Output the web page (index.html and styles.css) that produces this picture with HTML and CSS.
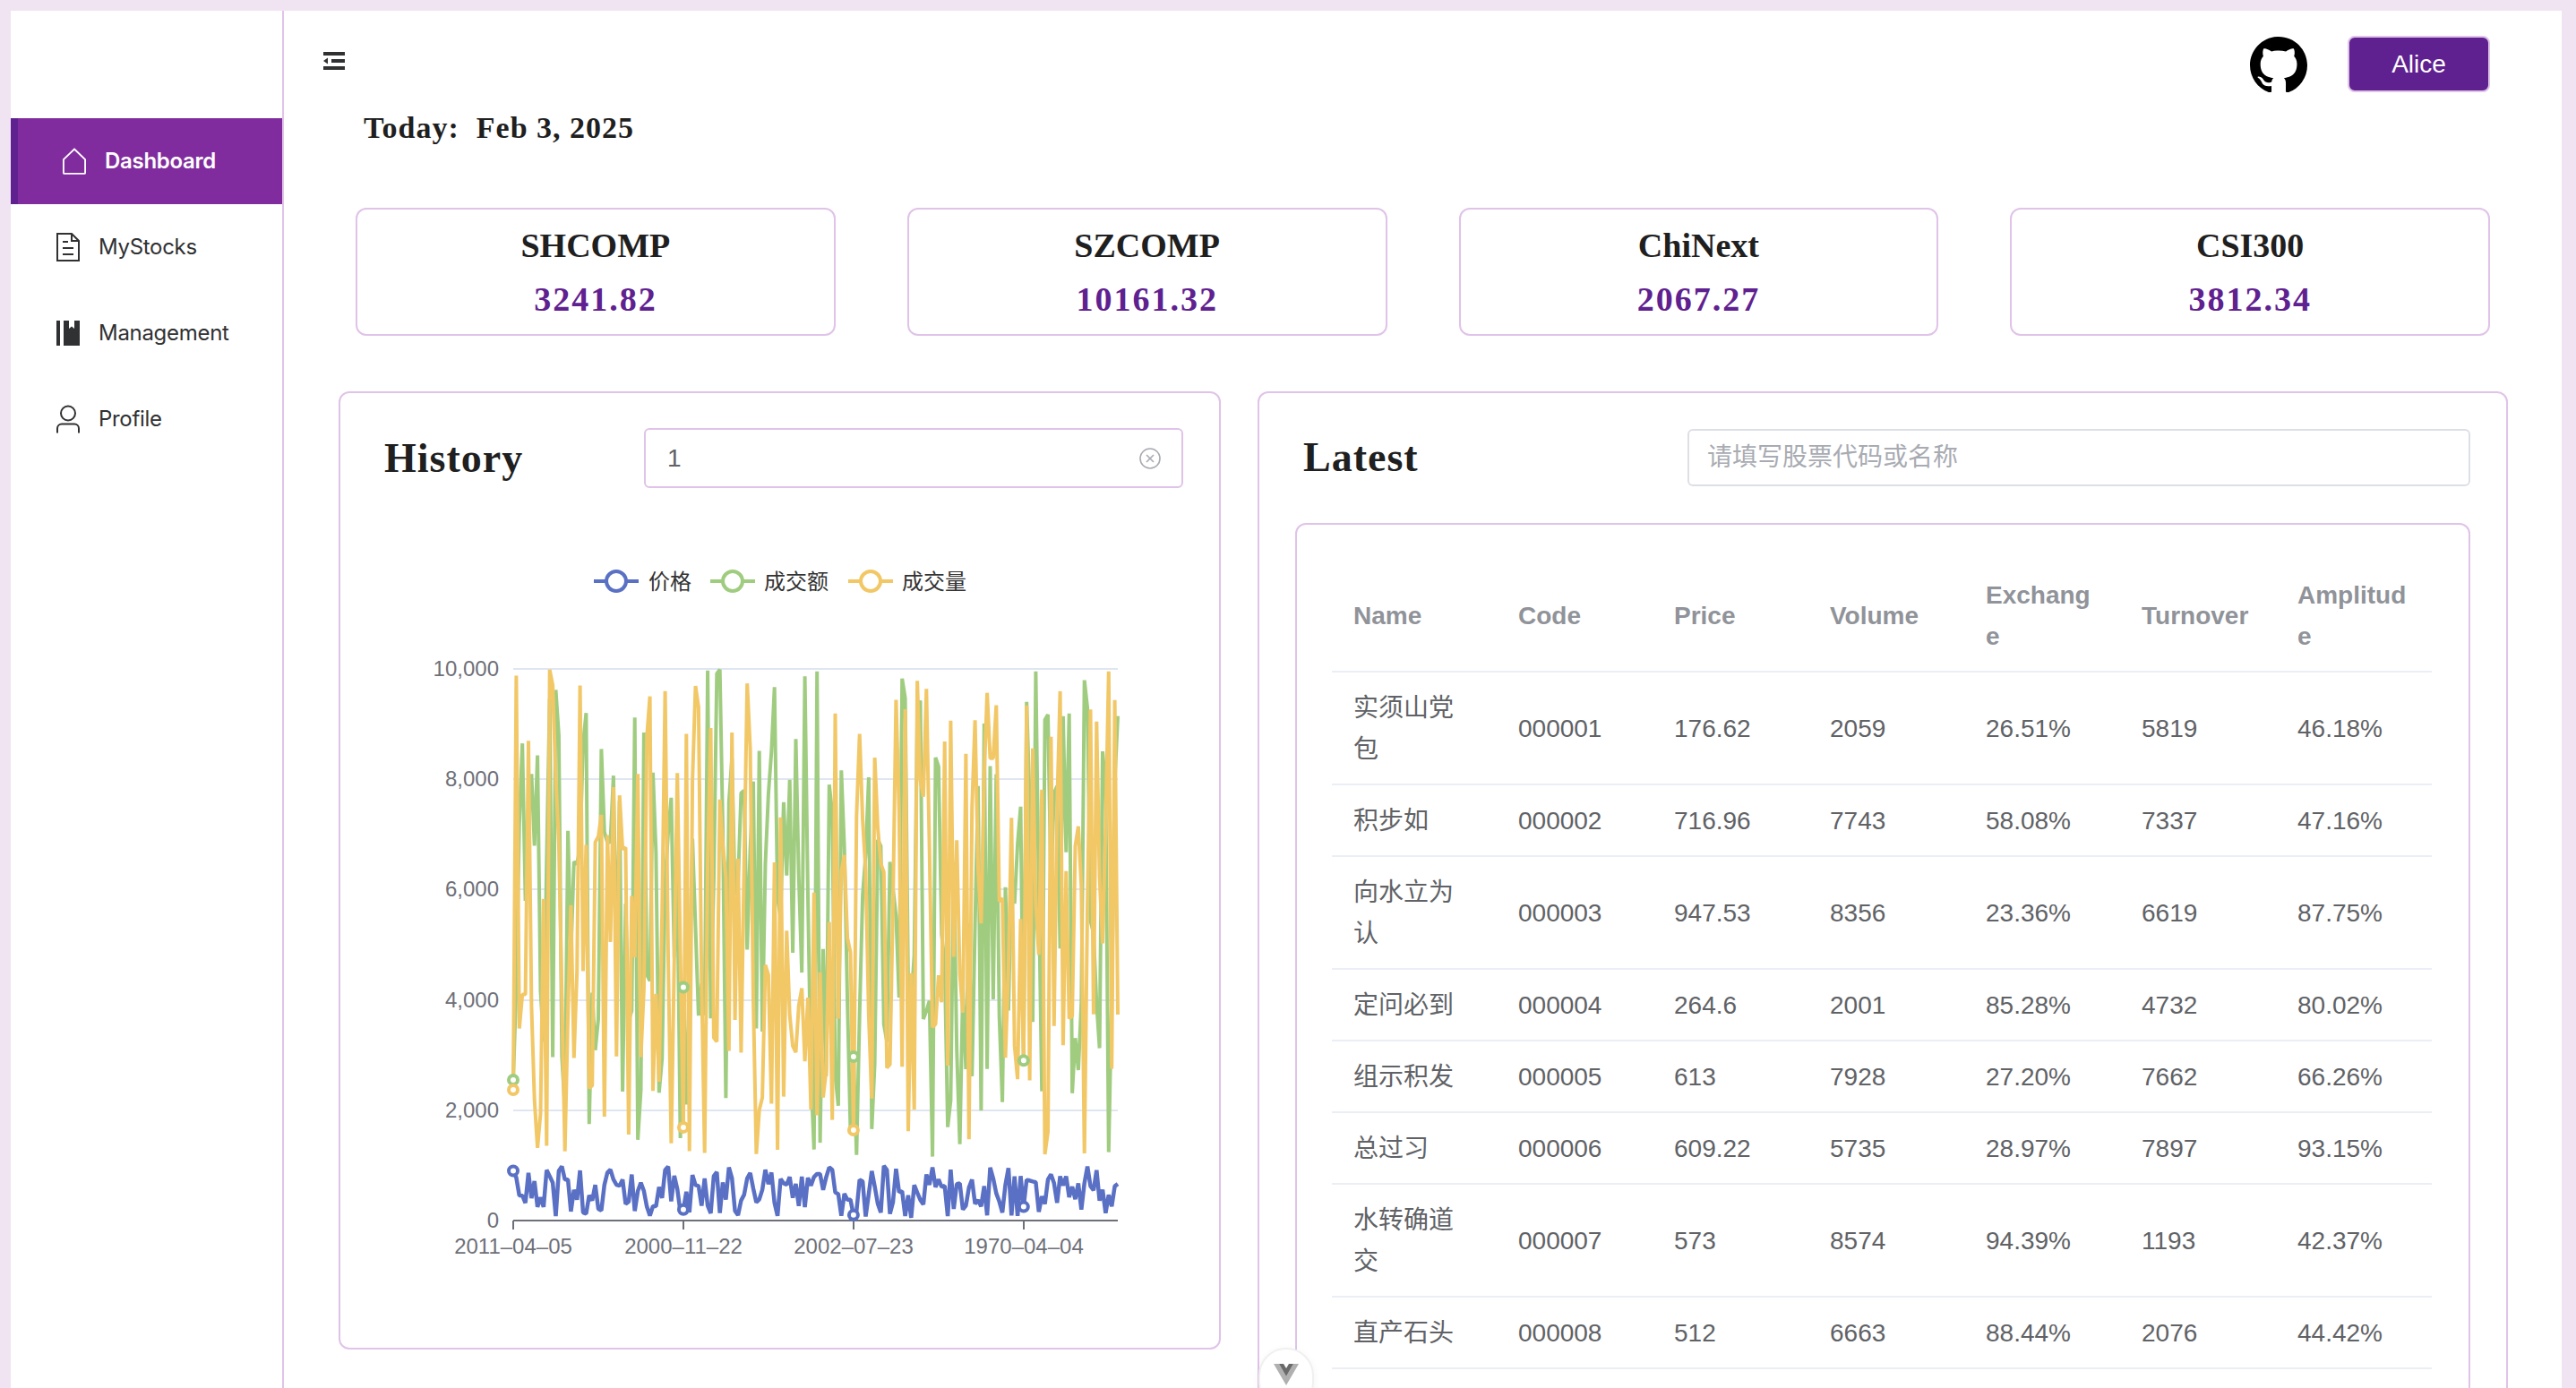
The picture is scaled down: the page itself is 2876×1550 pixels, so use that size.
FILE: index.html
```html
<!DOCTYPE html>
<html lang="en">
<head>
  <meta charset="UTF-8">
  <title>Dashboard</title>
  <link rel="stylesheet" href="styles.css">
</head>
<body>
<div class="layout">
  <aside class="sidebar">
    <a class="nav-item active">
      <svg class="nav-icon" viewBox="0 0 28 32" fill="none" stroke="currentColor" stroke-width="2"><path d="M14 1.5 L27 14 V30 a1 1 0 0 1 -1 1 H2 a1 1 0 0 1 -1 -1 V14 Z"/></svg>
      <span>Dashboard</span>
    </a>
    <a class="nav-item">
      <svg class="nav-icon" viewBox="0 0 26 32" fill="none" stroke="currentColor" stroke-width="2"><path d="M1 1 H17 L25 9 V31 H1 Z"/><path d="M17 1 V9 H25"/><path d="M7 10 H13 M7 17 H19 M7 24 H19"/></svg>
      <span>MyStocks</span>
    </a>
    <a class="nav-item">
      <svg class="nav-icon" viewBox="0 0 26 28" fill="currentColor"><path d="M0 0 H4 V28 H0 Z"/><path d="M8 0 H14 V9 L17 6.5 L20 9 V0 H26 V28 H8 Z"/></svg>
      <span>Management</span>
    </a>
    <a class="nav-item">
      <svg class="nav-icon" viewBox="0 0 26 31" fill="none" stroke="currentColor" stroke-width="2"><circle cx="13" cy="9" r="8"/><path d="M1 31 V26 a5 5 0 0 1 5 -5 H20 a5 5 0 0 1 5 5 V31"/></svg>
      <span>Profile</span>
    </a>
  </aside>

  <main class="main">
    <div class="topbar">
      <svg class="fold-icon" viewBox="0 0 24 20" fill="currentColor"><path d="M0 0 H24 V4 H0 Z M9 8 H24 V12 H9 Z M0 16 H24 V20 H0 Z M0 10 L5 6.5 V13.5 Z"/></svg>
      <div class="topbar-right">
        <svg class="github-icon" viewBox="0 0 16 15.5"><path d="M8 0C3.58 0 0 3.58 0 8c0 3.54 2.29 6.53 5.47 7.59.4.07.55-.17.55-.38 0-.19-.01-.82-.01-1.49-2.01.37-2.53-.49-2.69-.94-.09-.23-.48-.94-.82-1.13-.28-.15-.68-.52-.01-.53.63-.01 1.08.58 1.23.82.72 1.21 1.87.87 2.33.66.07-.52.28-.87.51-1.07-1.78-.2-3.64-.89-3.64-3.95 0-.87.31-1.59.82-2.15-.08-.2-.36-1.02.08-2.12 0 0 .67-.21 2.2.82.64-.18 1.32-.27 2-.27.68 0 1.36.09 2 .27 1.53-1.04 2.2-.82 2.2-.82.44 1.1.16 1.92.08 2.12.51.56.82 1.27.82 2.15 0 3.07-1.87 3.75-3.65 3.95.29.25.54.73.54 1.48 0 1.07-.01 1.93-.01 2.2 0 .21.15.46.55.38A8.013 8.013 0 0016 8c0-4.42-3.58-8-8-8z"/></svg>
        <button class="user-btn">Alice</button>
      </div>
    </div>

    <div class="today">Today:&nbsp; Feb 3, 2025</div>

    <div class="index-row">
      <div class="index-card"><div class="index-name">SHCOMP</div><div class="index-value">3241.82</div></div>
      <div class="index-card"><div class="index-name">SZCOMP</div><div class="index-value">10161.32</div></div>
      <div class="index-card"><div class="index-name">ChiNext</div><div class="index-value">2067.27</div></div>
      <div class="index-card"><div class="index-name">CSI300</div><div class="index-value">3812.34</div></div>
    </div>

    <div class="panels">
      <section class="panel history">
        <div class="panel-head">
          <h2 class="panel-title">History</h2>
          <div class="search history-search">
            <span class="search-value">1</span>
            <svg class="clear-icon" viewBox="0 0 24 24" fill="none" stroke="currentColor" stroke-width="1.6"><circle cx="12" cy="12" r="11"/><path d="M8 8 L16 16 M16 8 L8 16"/></svg>
          </div>
        </div>
        <svg class="chart" id="chart" viewBox="380 600 981 860">
          <g class="legend">
            <path class="blue-line" d="M663 649 H713"/><circle class="blue-mark" cx="688" cy="649" r="11"/>
            <text x="724" y="658">价格</text>
            <path class="green-line" d="M793 649 H843"/><circle class="green-mark" cx="818" cy="649" r="11"/>
            <text x="853" y="658">成交额</text>
            <path class="yellow-line" d="M947 649 H997"/><circle class="yellow-mark" cx="972" cy="649" r="11"/>
            <text x="1007" y="658">成交量</text>
          </g>
          <g class="grid">
            <path d="M573 747 H1248 M573 870 H1248 M573 993 H1248 M573 1117 H1248 M573 1240 H1248"/>
          </g>
          <g class="y-labels">
            <text x="557" y="755">10,000</text>
            <text x="557" y="878">8,000</text>
            <text x="557" y="1001">6,000</text>
            <text x="557" y="1125">4,000</text>
            <text x="557" y="1248">2,000</text>
            <text x="557" y="1371">0</text>
          </g>
          <path class="axis" d="M573 1363 H1248 M573 1363 V1373 M763 1363 V1373 M953 1363 V1373 M1143 1363 V1373"/>
          <g class="x-labels">
            <text x="573" y="1400">2011–04–05</text>
            <text x="763" y="1400">2000–11–22</text>
            <text x="953" y="1400">2002–07–23</text>
            <text x="1143" y="1400">1970–04–04</text>
          </g>
          <polyline class="blue-line" id="line-price"/>
          <polyline class="green-line" id="line-amount"/>
          <polyline class="yellow-line" id="line-volume"/>
          <g id="marks"></g>
        </svg>
      </section>

      <section class="panel latest">
        <div class="panel-head">
          <h2 class="panel-title">Latest</h2>
          <input class="search latest-search" type="text" placeholder="请填写股票代码或名称">
        </div>
        <div class="table-card">
          <table class="stock-table">
            <thead>
              <tr><th>Name</th><th>Code</th><th>Price</th><th>Volume</th><th>Exchange</th><th>Turnover</th><th>Amplitude</th></tr>
            </thead>
            <tbody>
              <tr><td>实须山党包</td><td>000001</td><td>176.62</td><td>2059</td><td>26.51%</td><td>5819</td><td>46.18%</td></tr>
              <tr><td>积步如</td><td>000002</td><td>716.96</td><td>7743</td><td>58.08%</td><td>7337</td><td>47.16%</td></tr>
              <tr><td>向水立为认</td><td>000003</td><td>947.53</td><td>8356</td><td>23.36%</td><td>6619</td><td>87.75%</td></tr>
              <tr><td>定问必到</td><td>000004</td><td>264.6</td><td>2001</td><td>85.28%</td><td>4732</td><td>80.02%</td></tr>
              <tr><td>组示积发</td><td>000005</td><td>613</td><td>7928</td><td>27.20%</td><td>7662</td><td>66.26%</td></tr>
              <tr><td>总过习</td><td>000006</td><td>609.22</td><td>5735</td><td>28.97%</td><td>7897</td><td>93.15%</td></tr>
              <tr><td>水转确道交</td><td>000007</td><td>573</td><td>8574</td><td>94.39%</td><td>1193</td><td>42.37%</td></tr>
              <tr><td>直产石头</td><td>000008</td><td>512</td><td>6663</td><td>88.44%</td><td>2076</td><td>44.42%</td></tr>
            </tbody>
          </table>
        </div>
      </section>
    </div>
  </main>
</div>

<div class="devtools-btn">
  <svg viewBox="0 0 28 24"><path fill="#b0b0b0" d="M0 0 H6 L14 14 L22 0 H28 L14 24 Z"/><path fill="#6a6a6a" d="M6 0 H11 L14 5 L17 0 H22 L14 14 Z"/></svg>
</div>

<script src="app.js"></script>
</body>
</html>
```

FILE: styles.css
```css
* {
  box-sizing: border-box;
}
html, body {
  margin: 0;
  height: 100%;
  overflow: hidden;
}
body {
  font-family: "Liberation Sans", "Noto Sans CJK SC", sans-serif;
  color: #606266;
}
.layout {
  display: flex;
  height: 100vh;
  padding: 12px 16px 0 12px;
  background: #f1e4f2;
}

/* sidebar */
.sidebar {
  width: 305px;
  flex: none;
  padding-top: 120px;
  background: #fff;
  border-right: 2px solid #e0c3e8;
}
.nav-item {
  display: flex;
  align-items: center;
  gap: 21px;
  height: 96px;
  padding-left: 51px;
  font-family: Inter, "Liberation Sans", sans-serif;
  font-size: 24px;
  letter-spacing: -0.3px;
  color: #303133;
}
.nav-item span {
  margin-top: -2px;
}
.nav-item.active {
  padding-left: 50px;
  border-left: 8px solid #5f2190;
  background: #812c9e;
  color: #fff;
  font-weight: 600;
}
.nav-icon {
  width: 26px;
  height: 32px;
  flex: none;
}

/* main */
.main {
  flex: 1;
  min-width: 0;
  overflow: hidden;
  background: #fff;
}
.topbar {
  display: flex;
  align-items: center;
  justify-content: space-between;
  height: 91px;
  padding: 28px 80px 0 44px;
}
.fold-icon {
  width: 24px;
  height: 20px;
  margin-top: -8px;
  color: #303133;
}
.topbar-right {
  display: flex;
  align-items: center;
  gap: 45px;
}
.github-icon {
  width: 64px;
  height: 62px;
}
.user-btn {
  width: 159px;
  height: 63px;
  border: 2px solid #e0c3e8;
  border-radius: 8px;
  background: #5f2190;
  color: #fff;
  font-family: inherit;
  font-size: 28px;
}
.today {
  margin: 20px 0 0 89px;
  font-family: "Liberation Serif", serif;
  font-size: 34px;
  font-weight: 700;
  line-height: 40px;
  letter-spacing: 1px;
  color: #1f1f1f;
}
.index-row {
  display: grid;
  grid-template-columns: repeat(4, 1fr);
  gap: 80px;
  margin-top: 69px;
  padding: 0 80px;
}
.index-card {
  height: 143px;
  padding-top: 18px;
  border: 2px solid #e0c3e8;
  border-radius: 12px;
  text-align: center;
  font-family: "Liberation Serif", serif;
  font-weight: 700;
}
.index-name {
  font-size: 38px;
  line-height: 44px;
  color: #1f1f1f;
}
.index-value {
  margin-top: 16px;
  font-size: 38px;
  line-height: 44px;
  letter-spacing: 2px;
  color: #5f2190;
}

/* panels */
.panels {
  display: grid;
  grid-template-columns: 985px 1396px;
  gap: 41px;
  align-items: start;
  margin: 62px 0 0 61px;
}
.panel {
  border: 2px solid #e0c3e8;
  border-radius: 12px;
  background: #fff;
}
.history {
  height: 1070px;
}
.panel-head {
  display: flex;
  align-items: center;
  padding: 39px 0 0 49px;
}
.panel-title {
  margin: 0;
  font-family: "Liberation Serif", serif;
  font-size: 46px;
  font-weight: 700;
  line-height: 60px;
  letter-spacing: 1px;
  color: #1f1f1f;
}
.search {
  height: 67px;
  border: 2px solid #e0c3e8;
  border-radius: 6px;
  font-family: inherit;
  font-size: 28px;
  color: #606266;
}
.history-search {
  display: flex;
  align-items: center;
  justify-content: space-between;
  width: 602px;
  margin-left: auto;
  margin-right: 40px;
  padding: 0 23px 0 24px;
}
.clear-icon {
  width: 24px;
  height: 24px;
  color: #a8abb2;
}
.chart {
  display: block;
  width: 981px;
  height: 860px;
  margin-top: 55px;
  font-family: "Liberation Sans", "Noto Sans CJK SC", sans-serif;
  font-size: 24px;
}
.legend text {
  fill: #333;
}
.grid path {
  stroke: #e0e6f1;
  stroke-width: 2;
  fill: none;
}
.y-labels text {
  text-anchor: end;
  fill: #6e7079;
}
.x-labels text {
  text-anchor: middle;
  fill: #6e7079;
}
.axis {
  stroke: #6e7079;
  stroke-width: 2;
  fill: none;
}
.blue-line, .green-line, .yellow-line {
  fill: none;
  stroke-width: 4;
  stroke-linejoin: bevel;
}
.blue-line { stroke: #5a70c4; stroke-width: 4.5; }
.green-line { stroke: #a0cc80; }
.yellow-line { stroke: #f2c766; }
.legend path { stroke-width: 4; }
.blue-mark, .green-mark, .yellow-mark {
  fill: #fff;
  stroke-width: 4;
}
.blue-mark { stroke: #5a70c4; }
.green-mark { stroke: #a0cc80; }
.yellow-mark { stroke: #f2c766; }

/* latest */
.latest .panel-head {
  padding-top: 40px;
  padding-right: 40px;
}
.latest-search {
  width: 874px;
  height: 64px;
  margin-left: auto;
  padding: 0 20px;
  border-color: #dcdfe6;
  outline: none;
}
.latest-search::placeholder {
  color: #a8abb2;
}
.table-card {
  margin: 41px 40px 0;
  padding: 39px 39px 60px;
  border: 2px solid #e0c3e8;
  border-radius: 12px;
}
.stock-table {
  width: 1228px;
  border-collapse: collapse;
  table-layout: fixed;
  font-size: 28px;
  line-height: 46px;
}
.stock-table th, .stock-table td {
  width: 174px;
  padding: 17px 24px 15px;
  border-bottom: 2px solid #ebeef5;
  text-align: left;
  word-break: break-all;
}
.stock-table th:first-child {
  width: 184px;
}
.stock-table th {
  color: #909399;
  font-weight: 700;
}
.stock-table td {
  color: #606266;
}

.devtools-btn {
  position: fixed;
  left: 1405px;
  top: 1505px;
  width: 62px;
  height: 70px;
  padding: 16px 0 0 15px;
  border: 2px solid #f0f0f0;
  border-radius: 31px;
  background: #fff;
  box-shadow: 0 2px 8px rgba(0, 0, 0, 0.05);
}
.devtools-btn svg {
  display: block;
  width: 28px;
  height: 24px;
}
```

FILE: app.js
```js
// made up history data, drawn into the svg chart
var seed = 20250203;
function rand() {
  seed = (seed + 0x6D2B79F5) | 0;
  var t = Math.imul(seed ^ (seed >>> 15), 1 | seed);
  t = (t + Math.imul(t ^ (t >>> 7), 61 | t)) ^ t;
  return ((t ^ (t >>> 14)) >>> 0) / 4294967296;
}

var COUNT = 200;
var LEFT = 573, RIGHT = 1248, ZERO = 1363, FULL = 616;
var step = (RIGHT - LEFT) / (COUNT - 1);

function series(min, max, fixed) {
  var list = [];
  for (var i = 0; i < COUNT; i++) {
    list.push(fixed[i] !== undefined ? fixed[i] : min + rand() * (max - min));
  }
  return list;
}

var price = series(50, 1000, { 0: 900, 56: 200, 112: 100, 168: 250 });
var amount = series(1100, 10000, { 0: 2550, 56: 4230, 112: 2970, 168: 2900 });
var volume = series(1100, 10000, { 0: 2370, 1: 9880, 56: 1690, 112: 1640, 168: 2900 });

function px(i) { return LEFT + i * step; }
function py(v) { return ZERO - v / 10000 * FULL; }

function draw(id, data) {
  var pts = data.map(function (v, i) {
    return px(i).toFixed(1) + ',' + py(v).toFixed(1);
  });
  document.getElementById(id).setAttribute('points', pts.join(' '));
}
draw('line-price', price);
draw('line-amount', amount);
draw('line-volume', volume);

var marks = document.getElementById('marks');
function mark(cls, i, v) {
  var c = document.createElementNS('http://www.w3.org/2000/svg', 'circle');
  c.setAttribute('class', cls);
  c.setAttribute('cx', px(i));
  c.setAttribute('cy', py(v));
  c.setAttribute('r', 5);
  marks.appendChild(c);
}
[0, 56, 112, 168].forEach(function (i) {
  mark('blue-mark', i, price[i]);
  mark('green-mark', i, amount[i]);
  if (i !== 168) mark('yellow-mark', i, volume[i]);
});
```
